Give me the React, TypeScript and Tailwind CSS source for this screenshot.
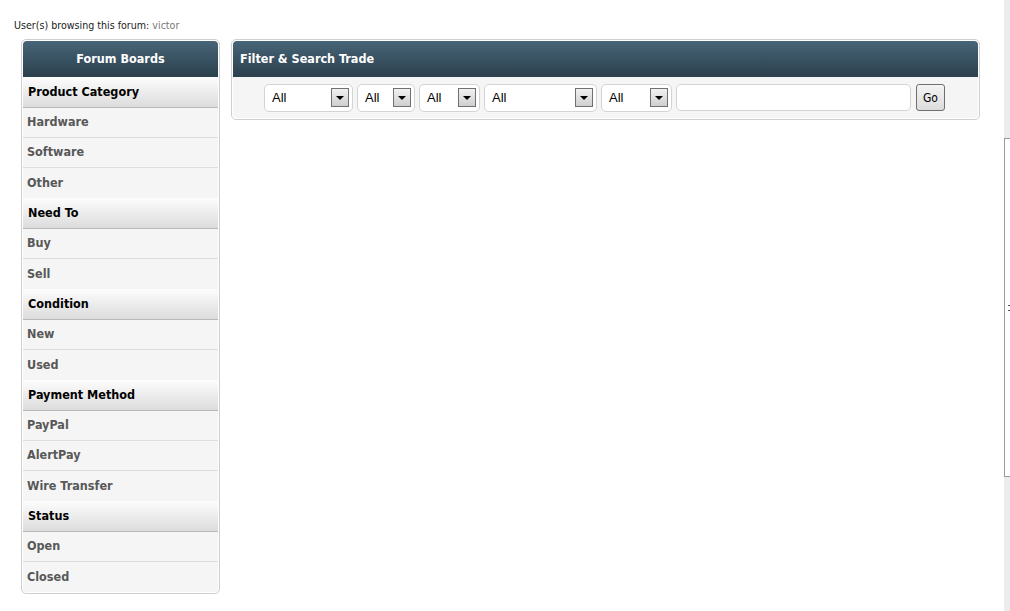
import React from 'react';

const font = { fontFamily: '"DejaVu Sans Condensed", "DejaVu Sans", Tahoma, sans-serif' };

const sections: { title: string; items: string[] }[] = [
  { title: 'Product Category', items: ['Hardware', 'Software', 'Other'] },
  { title: 'Need To', items: ['Buy', 'Sell'] },
  { title: 'Condition', items: ['New', 'Used'] },
  { title: 'Payment Method', items: ['PayPal', 'AlertPay', 'Wire Transfer'] },
  { title: 'Status', items: ['Open', 'Closed'] },
];

function FakeSelect({ width }: { width: string }) {
  return (
    <div className={`${width} h-[28px] rounded-[5px] border border-[#d4d4d4] bg-white flex items-center pl-[7px] pr-[3px]`}>
      <span className="flex-1 text-[13px] text-black font-['Liberation_Sans',Arial,sans-serif]">All</span>
      <span className="w-[18px] h-[19px] border border-[#707070] bg-gradient-to-b from-[#f2f2f2] to-[#cfcfcf] flex items-center justify-center">
        <span className="w-0 h-0 border-l-[4px] border-r-[4px] border-t-[4px] border-l-transparent border-r-transparent border-t-black" />
      </span>
    </div>
  );
}

export default function App() {
  return (
    <div className="h-[611px] w-[1010px] overflow-hidden bg-white flex" style={font}>
      <div className="flex-1">
        <div className="pl-[14px] pt-[18px] h-[39px] text-[10.6px] text-[#222]">
          User(s) browsing this forum: <span className="text-[#777]">victor</span>
        </div>

        <div className="flex items-start pl-[21px] gap-[11px]">
          {/* Forum boards */}
          <div className="w-[199px] rounded-[5px] border border-[#cfcfcf] p-px bg-white">
            <div className="h-[36px] rounded-t-[4px] bg-gradient-to-b from-[#476578] to-[#2c404d] flex items-center justify-center text-white font-bold text-[12.5px]">
              Forum Boards
            </div>
            {sections.map((s) => (
              <div key={s.title}>
                <div className="h-[31px] border-b border-[#b8b8b8] bg-gradient-to-b from-[#fdfdfd] to-[#dcdcdc] flex items-center pl-[5px] text-[12.5px] font-bold text-black">
                  {s.title}
                </div>
                {s.items.map((it) => (
                  <div key={it} className="h-[30px] border-b border-[#dedede] last:border-b-0 bg-[#f5f5f5] flex items-center pl-[4px] text-[12.5px] font-bold text-[#585858]">
                    {it}
                  </div>
                ))}
              </div>
            ))}
          </div>

          {/* Filter panel */}
          <div className="w-[749px] rounded-[5px] border border-[#cfcfcf] p-px bg-white">
            <div className="h-[36px] rounded-t-[4px] bg-gradient-to-b from-[#476578] to-[#2c404d] flex items-center pl-[7px] text-white font-bold text-[12.5px]">
              Filter &amp; Search Trade
            </div>
            <div className="h-[41px] bg-[#f5f5f5] rounded-b-[4px] flex items-center justify-center gap-[4px] pr-[2px]">
              <FakeSelect width="w-[89px]" />
              <FakeSelect width="w-[58px]" />
              <FakeSelect width="w-[61px]" />
              <FakeSelect width="w-[113px]" />
              <FakeSelect width="w-[71px]" />
              <div className="w-[235px] h-[27px] rounded-[5px] border border-[#d4d4d4] bg-white" />
              <button className="ml-[1px] w-[29px] h-[27px] rounded-[3px] border border-[#707070] bg-gradient-to-b from-[#f4f4f4] to-[#dcdcdc] text-[12px] text-black">
                Go
              </button>
            </div>
          </div>
        </div>
      </div>

      {/* partial scrollbar */}
      <div className="w-[6px] bg-[#ececec] flex flex-col">
        <div className="h-[138px]" />
        <div className="h-[339px] bg-white border-l border-t border-b border-[#9a9a9a] flex items-center justify-end">
          <span className="w-[2px] h-[6px] border-y border-[#555] bg-transparent" />
        </div>
      </div>
    </div>
  );
}
